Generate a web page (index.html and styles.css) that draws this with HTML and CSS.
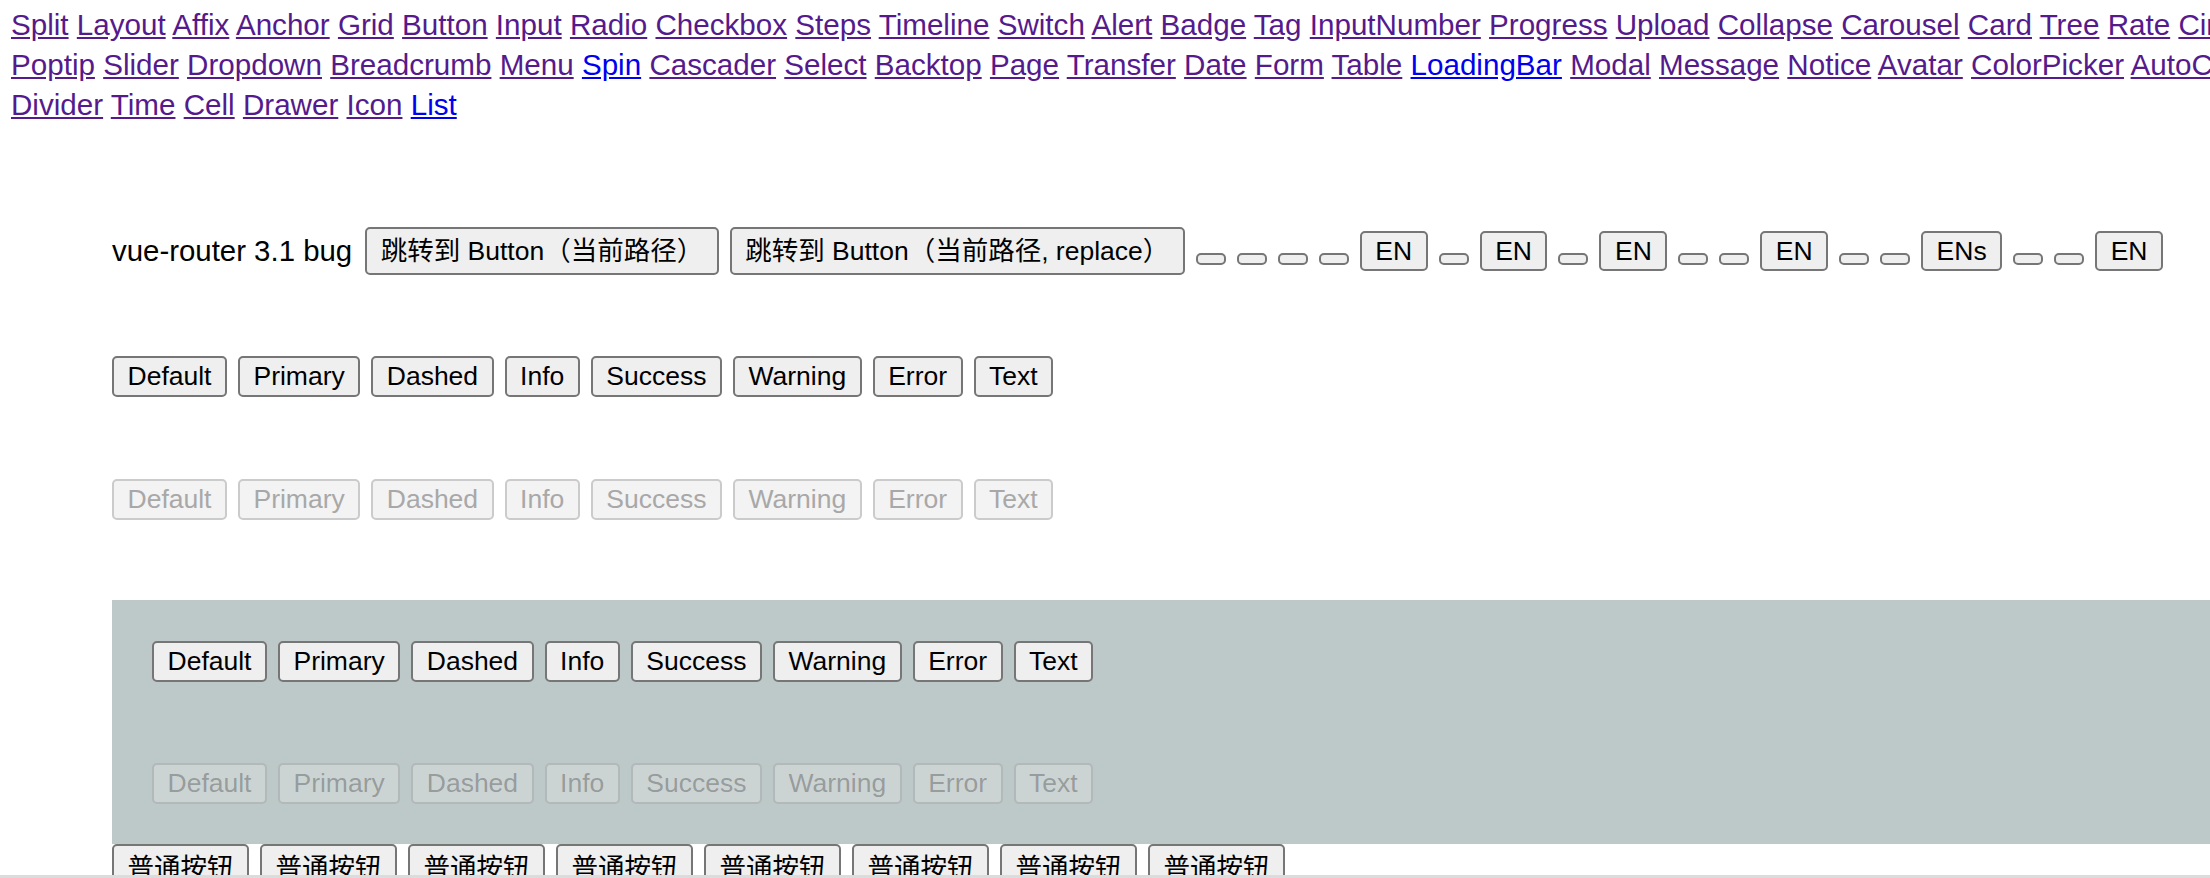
FILE: index.html
```html
<!DOCTYPE html>
<html lang="zh">
<head>
<meta charset="utf-8">
<title>Button</title>
<link rel="stylesheet" href="styles.css">
</head>
<body>
<nav class="nav">
  <div class="nav-line">
    <a class="link visited" href="#">Split</a> <a class="link visited" href="#">Layout</a> <a class="link visited" href="#">Affix</a> <a class="link visited" href="#">Anchor</a> <a class="link visited" href="#">Grid</a> <a class="link visited" href="#">Button</a> <a class="link visited" href="#">Input</a> <a class="link visited" href="#">Radio</a> <a class="link visited" href="#">Checkbox</a> <a class="link visited" href="#">Steps</a> <a class="link visited" href="#">Timeline</a> <a class="link visited" href="#">Switch</a> <a class="link visited" href="#">Alert</a> <a class="link visited" href="#">Badge</a> <a class="link visited" href="#">Tag</a> <a class="link visited" href="#">InputNumber</a> <a class="link visited" href="#">Progress</a> <a class="link visited" href="#">Upload</a> <a class="link visited" href="#">Collapse</a> <a class="link visited" href="#">Carousel</a> <a class="link visited" href="#">Card</a> <a class="link visited" href="#">Tree</a> <a class="link visited" href="#">Rate</a> <a class="link visited" href="#">Circle</a> <a class="link visited" href="#">Tabs</a> <a class="link visited" href="#">Tooltip</a>
  </div>
  <div class="nav-line">
    <a class="link visited" href="#">Poptip</a> <a class="link visited" href="#">Slider</a> <a class="link visited" href="#">Dropdown</a> <a class="link visited" href="#">Breadcrumb</a> <a class="link visited" href="#">Menu</a> <a class="link" href="#">Spin</a> <a class="link visited" href="#">Cascader</a> <a class="link visited" href="#">Select</a> <a class="link visited" href="#">Backtop</a> <a class="link visited" href="#">Page</a> <a class="link visited" href="#">Transfer</a> <a class="link visited" href="#">Date</a> <a class="link visited" href="#">Form</a> <a class="link visited" href="#">Table</a> <a class="link" href="#">LoadingBar</a> <a class="link visited" href="#">Modal</a> <a class="link visited" href="#">Message</a> <a class="link visited" href="#">Notice</a> <a class="link visited" href="#">Avatar</a> <a class="link visited" href="#">ColorPicker</a> <a class="link visited" href="#">AutoComplete</a> <a class="link visited" href="#">Scroll</a>
  </div>
  <div class="nav-line">
    <a class="link visited" href="#">Divider</a> <a class="link visited" href="#">Time</a> <a class="link visited" href="#">Cell</a> <a class="link visited" href="#">Drawer</a> <a class="link visited" href="#">Icon</a> <a class="link" href="#">List</a>
  </div>
</nav>

<main class="view">
  <div class="row row-router">
    <span class="label">vue-router 3.1 bug</span>
    <button class="btn btn-cjk">跳转到 Button（当前路径）</button>
    <button class="btn btn-cjk">跳转到 Button（当前路径, replace）</button>
    <button class="btn btn-empty"></button>
    <button class="btn btn-empty"></button>
    <button class="btn btn-empty"></button>
    <button class="btn btn-empty"></button>
    <button class="btn">EN</button>
    <button class="btn btn-empty"></button>
    <button class="btn">EN</button>
    <button class="btn btn-empty"></button>
    <button class="btn">EN</button>
    <button class="btn btn-empty"></button>
    <button class="btn btn-empty"></button>
    <button class="btn">EN</button>
    <button class="btn btn-empty"></button>
    <button class="btn btn-empty"></button>
    <button class="btn">ENs</button>
    <button class="btn btn-empty"></button>
    <button class="btn btn-empty"></button>
    <button class="btn">EN</button>
  </div>

  <div class="row row-types">
    <button class="btn">Default</button>
    <button class="btn">Primary</button>
    <button class="btn">Dashed</button>
    <button class="btn">Info</button>
    <button class="btn">Success</button>
    <button class="btn">Warning</button>
    <button class="btn">Error</button>
    <button class="btn">Text</button>
  </div>

  <div class="row row-disabled">
    <button class="btn" disabled>Default</button>
    <button class="btn" disabled>Primary</button>
    <button class="btn" disabled>Dashed</button>
    <button class="btn" disabled>Info</button>
    <button class="btn" disabled>Success</button>
    <button class="btn" disabled>Warning</button>
    <button class="btn" disabled>Error</button>
    <button class="btn" disabled>Text</button>
  </div>

  <section class="panel">
    <div class="row">
      <button class="btn">Default</button>
      <button class="btn">Primary</button>
      <button class="btn">Dashed</button>
      <button class="btn">Info</button>
      <button class="btn">Success</button>
      <button class="btn">Warning</button>
      <button class="btn">Error</button>
      <button class="btn">Text</button>
    </div>
    <div class="row">
      <button class="btn" disabled>Default</button>
      <button class="btn" disabled>Primary</button>
      <button class="btn" disabled>Dashed</button>
      <button class="btn" disabled>Info</button>
      <button class="btn" disabled>Success</button>
      <button class="btn" disabled>Warning</button>
      <button class="btn" disabled>Error</button>
      <button class="btn" disabled>Text</button>
    </div>
  </section>

  <div class="row row-cjk">
    <button class="btn btn-cjk">普通按钮</button>
    <button class="btn btn-cjk">普通按钮</button>
    <button class="btn btn-cjk">普通按钮</button>
    <button class="btn btn-cjk">普通按钮</button>
    <button class="btn btn-cjk">普通按钮</button>
    <button class="btn btn-cjk">普通按钮</button>
    <button class="btn btn-cjk">普通按钮</button>
    <button class="btn btn-cjk">普通按钮</button>
  </div>
</main>

<div class="scrollbar"></div>
</body>
</html>
```

FILE: styles.css
```css
html {
  overflow: hidden;
}

body {
  margin: 0;
  font-family: "Liberation Sans", "Noto Sans CJK SC", sans-serif;
  font-size: 29.6px;
  line-height: 40px;
  color: #000;
  background: #fff;
}

.nav {
  padding: 5px 0 0 11px;
}

.nav-line {
  white-space: nowrap;
}

.link {
  color: #0000ee;
  text-decoration: underline;
}

.link.visited {
  color: #551a8b;
}

.view {
  padding-left: 112px;
}

.row {
  display: flex;
  align-items: center;
  gap: 11px;
  white-space: nowrap;
}

.row-router {
  margin-top: 102px;
}

.label {
  font-size: 29.4px;
  margin-right: 2px;
}

.row-types {
  margin-top: 81px;
}

.row-disabled {
  margin-top: 82.5px;
}

.btn {
  font-family: "Liberation Sans", "Noto Sans CJK SC", sans-serif;
  font-size: 26.5px;
  line-height: 28.5px;
  color: #000;
  background: #efefef;
  border: 2px solid #767676;
  border-radius: 5px;
  padding: 4px 13.5px;
  margin: 0;
  flex: none;
}

.btn-cjk {
  line-height: 36px;
}

.btn-empty {
  width: 30px;
  height: 12px;
  padding: 0;
  margin-top: 16px;
}

.btn:disabled {
  color: #a8a8a8;
  background: #f3f3f3;
  border-color: #cbcbcb;
}

.panel {
  margin-top: 80.5px;
  background: #bdc8c8;
  padding: 41px 40px 40.5px;
  display: flex;
  flex-direction: column;
  gap: 81.5px;
}

.panel .btn:disabled {
  color: rgba(16, 16, 16, 0.3);
  background: rgba(239, 239, 239, 0.3);
  border-color: rgba(118, 118, 118, 0.3);
}

.row-cjk {
  align-items: flex-start;
}

.scrollbar {
  position: fixed;
  left: 0;
  right: 0;
  bottom: 0;
  height: 3px;
  background: #dcdcdc;
}
```
